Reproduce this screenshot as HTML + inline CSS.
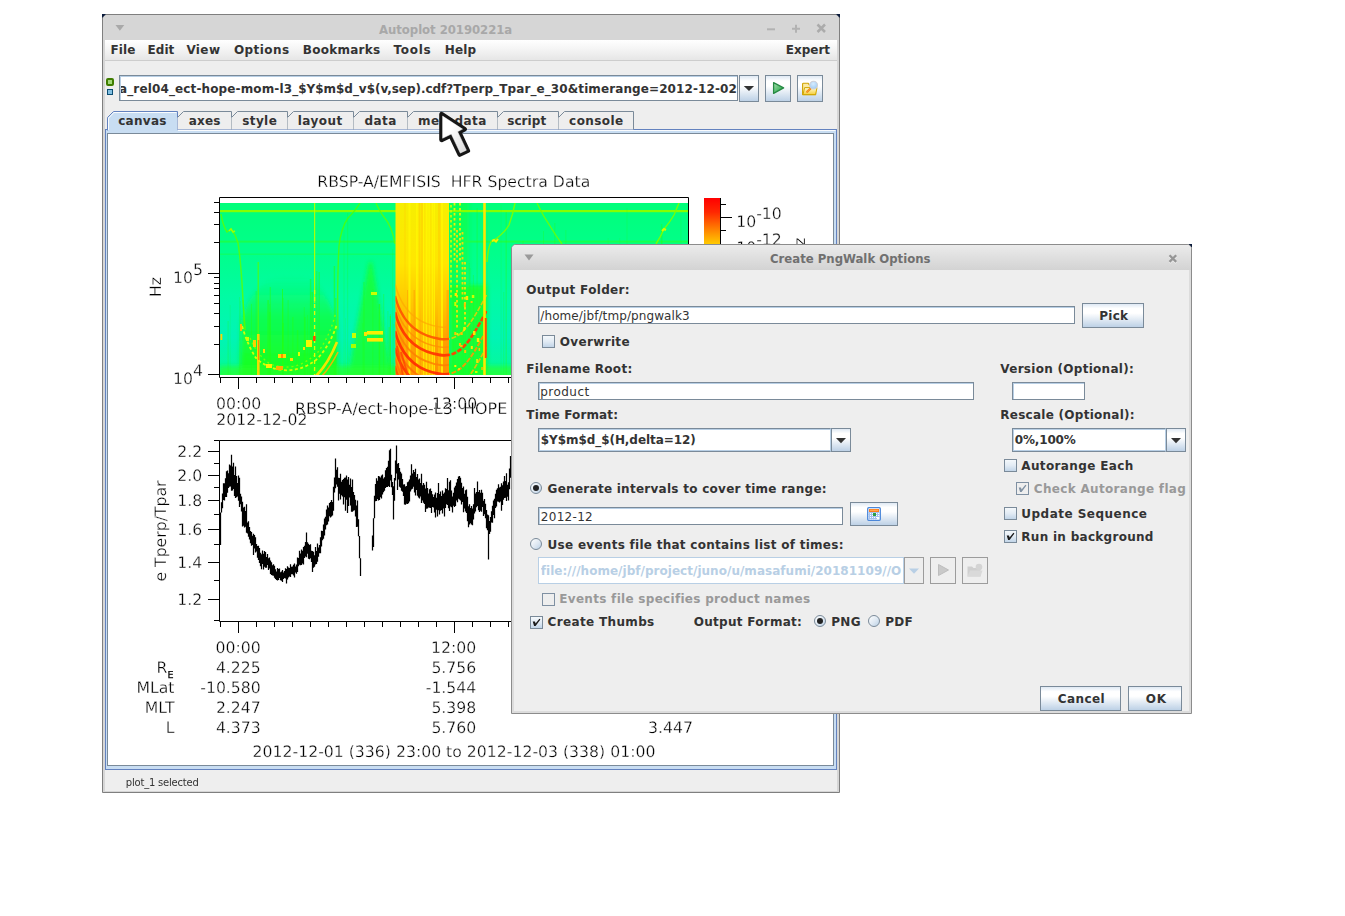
<!DOCTYPE html>
<html><head><meta charset="utf-8"><title>Autoplot</title>
<style>

html,body{margin:0;padding:0;background:#fff;}
body{width:1345px;height:916px;position:relative;overflow:hidden;font-family:"DejaVu Sans","Liberation Sans",sans-serif;font-size:12px;color:#333;}
div,span{position:absolute;box-sizing:border-box;}
.b{font-weight:bold;letter-spacing:0.25px;white-space:pre;line-height:14px;}
.n{font-weight:normal;letter-spacing:0.1px;white-space:pre;line-height:14px;}
#win{left:102px;top:14px;width:738px;height:779px;background:#d6d6d6;border:1px solid #7f7f7f;border-radius:4px 4px 0 0;}
.corner{width:4px;height:4px;background:#0a1a3a;}
.wt{font:bold 13px "DejaVu Sans Condensed","DejaVu Sans",sans-serif;white-space:pre;line-height:16px;}
#menubar{left:105px;top:40px;width:732px;height:21px;background:linear-gradient(#ffffff,#f6f6f6 40%,#e6e6e6);border-bottom:1px solid #cdcdcd;}
#pane{left:105px;top:61px;width:732px;height:730px;background:#eeeeee;}
.tf{background:#fff;border:1px solid #7a8a99;box-shadow:inset 1px 1px 0 #b8cfe5;overflow:hidden;white-space:pre;}
.btn{border:1px solid #7a8a99;background:linear-gradient(#dfe9f4 0%,#ffffff 20%,#ffffff 40%,#bdd1e6 100%);}
.btn.dis{border-color:#9c9c9c;background:#eeeeee;}
.cb{width:13px;height:13px;border:1px solid #7a8a99;background:linear-gradient(#f4f8fb 0%,#e2ebf4 50%,#c2d5e8 100%);}
.cb.dis{border-color:#7f90a2;background:#eeeeee;}
.rb{width:12px;height:12px;border:1px solid #7a8a99;border-radius:50%;background:linear-gradient(135deg,#ffffff 0%,#dbe6f1 60%,#b8cfe5 100%);}
.rb.on::after{content:"";position:absolute;left:2px;top:2px;width:6px;height:6px;border-radius:50%;background:#222;}
#dlg{left:511px;top:244px;width:681px;height:470px;border:1px solid #8c8c8c;border-radius:5px 5px 0 0;background:#dcdcdc;box-shadow:inset 0 1px 0 #fafafa;}
#dtitle{left:512px;top:245px;width:679px;height:25px;border-radius:4px 4px 0 0;background:linear-gradient(#ebebeb,#d3d3d3);}
#dbody{left:514px;top:270px;width:675px;height:441px;background:#eeeeee;}
.dis{color:#999;}
svg{position:absolute;}

</style></head>
<body>

<div id="win"></div>
<div class="corner" style="left:102px;top:14px;clip-path:polygon(0 0,100% 0,0 100%)"></div>
<div class="corner" style="left:836px;top:14px;clip-path:polygon(0 0,100% 0,100% 100%)"></div>
<span class="wt" style="left:379px;top:22px;color:#a8a8a8;letter-spacing:-0.05px">Autoplot 20190221a</span>
<svg style="left:100px;top:14px" width="745" height="26" viewBox="0 0 745 26">
<path d="M15.5 11 L24.3 11 L19.9 16.8 Z" fill="#a9a9a9"/>
<path d="M667 15.3 H675" stroke="#b2b2b2" stroke-width="2"/>
<path d="M692 14.7 H700 M696 10.7 V18.7" stroke="#b2b2b2" stroke-width="2"/>
<path d="M717.5 10.5 L725 18 M725 10.5 L717.5 18" stroke="#ababab" stroke-width="2.5"/>
</svg>
<div id="menubar"></div>
<span class="b" style="left:110.4px;top:43px;letter-spacing:0.184px;">File</span>
<span class="b" style="left:147.6px;top:43px;letter-spacing:0.015px;">Edit</span>
<span class="b" style="left:186.4px;top:43px;letter-spacing:0.395px;">View</span>
<span class="b" style="left:233.9px;top:43px;letter-spacing:0.446px;">Options</span>
<span class="b" style="left:302.8px;top:43px;letter-spacing:0.248px;">Bookmarks</span>
<span class="b" style="left:393.5px;top:43px;letter-spacing:0.691px;">Tools</span>
<span class="b" style="left:444.7px;top:43px;letter-spacing:0.177px;">Help</span>
<span class="b" style="left:785.8px;top:43px;letter-spacing:-0.005px;">Expert</span>
<div id="pane"></div>
<div style="left:106px;top:78px;width:8px;height:8px;border:2px solid #3f7d00;border-radius:2px;background:#a2d878"></div>
<div style="left:107px;top:89px;width:6px;height:6px;border:1px solid #0b4d74;background:#82c0e2"></div>
<div class="tf" style="left:119px;top:75px;width:619px;height:26px"></div>
<div style="left:121px;top:77px;width:616px;height:22px;overflow:hidden"><span class="b" style="left:-2.0px;top:5px;letter-spacing:0.132px;">a_rel04_ect-hope-mom-l3_</span><span class="b" style="left:177.3px;top:5px;letter-spacing:-0.038px;">$Y$m$d_v$(v,sep).cdf?</span><span class="b" style="left:332.2px;top:5px;letter-spacing:0.100px;">Tperp_Tpar_e_30&amp;timerange=2012-12-02</span></div>
<div class="btn" style="left:739px;top:75px;width:20px;height:27px"></div>
<svg style="left:739px;top:75px" width="20" height="27" viewBox="0 0 20 27"><path d="M4.8 10.9 L15.1 10.9 L10 16 Z" fill="#333"/></svg>
<div class="btn" style="left:765px;top:75px;width:26px;height:27px"></div>
<svg style="left:765px;top:75px" width="26" height="27" viewBox="0 0 26 27"><defs><linearGradient id="gpl" x1="0" y1="0" x2="1" y2="1"><stop offset="0" stop-color="#a8e0b0"/><stop offset="0.6" stop-color="#4db866"/><stop offset="1" stop-color="#2f9a4c"/></linearGradient></defs><path d="M8.6 7.6 L18.6 12.9 L8.6 18.4 Z" fill="url(#gpl)" stroke="#278a44" stroke-width="1.3" stroke-linejoin="round"/></svg>
<div class="btn" style="left:797px;top:75px;width:26px;height:27px"></div>
<svg style="left:797px;top:75px" width="26" height="27" viewBox="0 0 26 27">
<defs><linearGradient id="gfo" x1="0" y1="0" x2="0" y2="1"><stop offset="0" stop-color="#fffbd0"/><stop offset="1" stop-color="#f6cf3c"/></linearGradient>
<radialGradient id="gle" cx="0.45" cy="0.35" r="0.7"><stop offset="0" stop-color="#d8ecff"/><stop offset="1" stop-color="#9ccaf4"/></radialGradient></defs>
<path d="M5.6 19.6 V9 Q5.6 8.2 6.4 8.2 H11 L12.4 10 H18.6 V19.6 Z" fill="#fbeaa4" stroke="#cfa200" stroke-width="1.1" stroke-linejoin="round"/>
<path d="M6 19.6 L7.6 12.6 H20 L18.6 19.6 Z" fill="url(#gfo)" stroke="#d2a700" stroke-width="1" stroke-linejoin="round"/>
<path d="M10.2 16.8 L13.6 13.5" stroke="#f08418" stroke-width="2.2" stroke-linecap="round"/>
<path d="M10.6 16.4 L13.2 13.9" stroke="#ffd040" stroke-width="0.9" stroke-dasharray="0.8 0.8"/>
<circle cx="16.6" cy="10.1" r="3.9" fill="url(#gle)" stroke="#d0d0d8" stroke-width="1.1"/>
</svg>
<div style="left:105px;top:129px;width:732px;height:641px;border:1px solid #6382bf;background:#c8ddf2"></div>
<svg style="left:0;top:0" width="1345" height="140" viewBox="0 0 1345 140"><path d="M107.5 130.5 L107.5 117.5 L113.5 111.5 L177.5 111.5 L177.5 129.5 L177.5 130.5 Z" fill="#c8ddf2" stroke="none"/><path d="M107.5 130.5 L107.5 117.5 L113.5 111.5 L177.5 111.5 L177.5 129.5" fill="none" stroke="#6382bf" stroke-width="1"/><path d="M177.5 129.5 L177.5 117.5 L183.5 111.5 L231.5 111.5 L231.5 129.5 Z" fill="#eeeeee" stroke="none"/><path d="M177.5 117.5 L183.5 111.5 L231.5 111.5 L231.5 129.5" fill="none" stroke="#7a8a99" stroke-width="1"/><path d="M231.5 129.5 L231.5 117.5 L237.5 111.5 L287.5 111.5 L287.5 129.5 Z" fill="#eeeeee" stroke="none"/><path d="M231.5 117.5 L237.5 111.5 L287.5 111.5 L287.5 129.5" fill="none" stroke="#7a8a99" stroke-width="1"/><path d="M287.5 129.5 L287.5 117.5 L293.5 111.5 L353.5 111.5 L353.5 129.5 Z" fill="#eeeeee" stroke="none"/><path d="M287.5 117.5 L293.5 111.5 L353.5 111.5 L353.5 129.5" fill="none" stroke="#7a8a99" stroke-width="1"/><path d="M353.5 129.5 L353.5 117.5 L359.5 111.5 L407.5 111.5 L407.5 129.5 Z" fill="#eeeeee" stroke="none"/><path d="M353.5 117.5 L359.5 111.5 L407.5 111.5 L407.5 129.5" fill="none" stroke="#7a8a99" stroke-width="1"/><path d="M407.5 129.5 L407.5 117.5 L413.5 111.5 L497.5 111.5 L497.5 129.5 Z" fill="#eeeeee" stroke="none"/><path d="M407.5 117.5 L413.5 111.5 L497.5 111.5 L497.5 129.5" fill="none" stroke="#7a8a99" stroke-width="1"/><path d="M497.5 129.5 L497.5 117.5 L503.5 111.5 L558.5 111.5 L558.5 129.5 Z" fill="#eeeeee" stroke="none"/><path d="M497.5 117.5 L503.5 111.5 L558.5 111.5 L558.5 129.5" fill="none" stroke="#7a8a99" stroke-width="1"/><path d="M558.5 129.5 L558.5 117.5 L564.5 111.5 L633.5 111.5 L633.5 129.5 Z" fill="#eeeeee" stroke="none"/><path d="M558.5 117.5 L564.5 111.5 L633.5 111.5 L633.5 129.5" fill="none" stroke="#7a8a99" stroke-width="1"/><path d="M108.5 130 V118.2 L113.9 112.5 H176.5" fill="none" stroke="#ffffff" stroke-width="1" opacity="0.9"/><path d="M178 130.5 H835.5" fill="none" stroke="#ffffff" stroke-width="1" opacity="0.9"/></svg>
<span class="b" style="left:118.2px;top:114px;letter-spacing:0.295px;">canvas</span>
<span class="b" style="left:188.7px;top:114px;letter-spacing:0.219px;">axes</span>
<span class="b" style="left:242.2px;top:114px;letter-spacing:0.409px;">style</span>
<span class="b" style="left:297.8px;top:114px;letter-spacing:0.435px;">layout</span>
<span class="b" style="left:364.5px;top:114px;letter-spacing:0.467px;">data</span>
<span class="b" style="left:418.0px;top:114px;letter-spacing:0.475px;">metadata</span>
<span class="b" style="left:507.2px;top:114px;letter-spacing:0.079px;">script</span>
<span class="b" style="left:569.1px;top:114px;letter-spacing:0.422px;">console</span>
<div style="left:107px;top:133px;width:727px;height:633px;background:#fff;border:1px solid #7a8a99;border-right-color:#7a8a99"></div>
<svg style="left:0;top:0;will-change:transform;opacity:0.999" width="1345" height="916" viewBox="0 0 1345 916" font-family="DejaVu Sans, Liberation Sans, sans-serif" font-size="15.7" fill="#000" text-rendering="geometricPrecision"><style>text{stroke:#fff;stroke-width:0.32px;}</style>
<defs><clipPath id="cpl"><rect x="220" y="441" width="470" height="180"/></clipPath><clipPath id="cpc"><rect x="108" y="134" width="725" height="632"/></clipPath><linearGradient id="gcb" x1="0" y1="0" x2="0" y2="1"><stop offset="0" stop-color="#ff0000"/><stop offset="0.08" stop-color="#ff2800"/><stop offset="0.2" stop-color="#ff9800"/><stop offset="0.3" stop-color="#fff000"/><stop offset="0.5" stop-color="#30ff00"/><stop offset="0.7" stop-color="#00ffa0"/><stop offset="0.85" stop-color="#0080ff"/><stop offset="1" stop-color="#000060"/></linearGradient></defs>
<g clip-path="url(#cpc)">
<text x="453.8" y="187" text-anchor="middle" xml:space="preserve">RBSP-A/EMFISIS  HFR Spectra Data</text>
<defs><linearGradient id="gbase" x1="0" y1="0" x2="0" y2="1"><stop offset="0" stop-color="#00ff7a"/><stop offset="0.3" stop-color="#00ff8c"/><stop offset="0.55" stop-color="#00fba4"/><stop offset="0.78" stop-color="#00f4b6"/><stop offset="0.93" stop-color="#04f8a0"/><stop offset="1" stop-color="#18ff60"/></linearGradient><linearGradient id="ghot" x1="0" y1="0" x2="0" y2="1"><stop offset="0" stop-color="#f6ee00"/><stop offset="0.35" stop-color="#ffe600"/><stop offset="0.6" stop-color="#ffc400"/><stop offset="0.8" stop-color="#ffa000"/><stop offset="1" stop-color="#ff9000"/></linearGradient><linearGradient id="gU" x1="0" y1="0" x2="0" y2="1"><stop offset="0" stop-color="#10ff40" stop-opacity="0"/><stop offset="0.4" stop-color="#14ff30" stop-opacity="0.7"/><stop offset="1" stop-color="#18ff18" stop-opacity="1"/></linearGradient><filter id="bl2" x="-10%" y="-10%" width="120%" height="120%"><feGaussianBlur stdDeviation="2.2"/></filter><filter id="bl1" x="-10%" y="-10%" width="120%" height="120%"><feGaussianBlur stdDeviation="0.7"/></filter><clipPath id="cps"><rect x="220" y="203" width="468" height="172"/></clipPath></defs>
<g clip-path="url(#cps)">
<rect x="220" y="203" width="468" height="172" fill="url(#gbase)"/>
<g filter="url(#bl2)">
<path d="M240 378 L241 322 Q247 300 258 288 Q285 268 316 282 Q330 300 337 322 L338 378 Z" fill="url(#gU)"/>
<path d="M348 378 L356 330 L369 262 L372 262 L382 318 L392 378 Z" fill="#18ff28" opacity="0.75"/>
<rect x="220" y="366" width="468" height="14" fill="#28ff30" opacity="0.55"/>
<rect x="449" y="285" width="38" height="100" fill="#18ff30" opacity="0.9"/>
<rect x="449" y="200" width="20" height="100" fill="#18ff30" opacity="0.5"/>
</g>
<rect x="220" y="210" width="468" height="2.2" fill="#86ff00"/>
<rect x="220" y="240.6" width="468" height="2" fill="#1cff48" opacity="0.9"/>
<rect x="220" y="253.5" width="176" height="1.4" fill="#10ff60" opacity="0.8"/>
<rect x="372.3" y="289" width="1" height="87" fill="#22ff18" opacity="0.37"/>
<rect x="603.1" y="251" width="0.8" height="125" fill="#22ff18" opacity="0.16"/>
<rect x="457.5" y="216" width="0.8" height="160" fill="#22ff18" opacity="0.25"/>
<rect x="333.7" y="266" width="1.4" height="110" fill="#22ff18" opacity="0.58"/>
<rect x="661.6" y="277" width="0.8" height="99" fill="#22ff18" opacity="0.25"/>
<rect x="675.0" y="275" width="0.8" height="101" fill="#22ff18" opacity="0.18"/>
<rect x="472.9" y="275" width="1" height="101" fill="#22ff18" opacity="0.32"/>
<rect x="269.8" y="287" width="1" height="89" fill="#22ff18" opacity="0.57"/>
<rect x="251.1" y="304" width="0.8" height="72" fill="#22ff18" opacity="0.55"/>
<rect x="468.7" y="263" width="1" height="113" fill="#22ff18" opacity="0.38"/>
<rect x="389.8" y="316" width="1" height="60" fill="#22ff18" opacity="0.63"/>
<rect x="335.3" y="298" width="1" height="78" fill="#22ff18" opacity="0.70"/>
<rect x="560.5" y="281" width="1" height="95" fill="#22ff18" opacity="0.17"/>
<rect x="459.5" y="300" width="1" height="76" fill="#22ff18" opacity="0.19"/>
<rect x="240.2" y="301" width="0.8" height="75" fill="#22ff18" opacity="0.29"/>
<rect x="628.2" y="248" width="1" height="128" fill="#22ff18" opacity="0.24"/>
<rect x="452.5" y="214" width="1.4" height="162" fill="#22ff18" opacity="0.17"/>
<rect x="347.3" y="213" width="0.8" height="163" fill="#22ff18" opacity="0.33"/>
<rect x="522.3" y="241" width="1.4" height="135" fill="#22ff18" opacity="0.25"/>
<rect x="532.3" y="323" width="0.8" height="53" fill="#22ff18" opacity="0.24"/>
<rect x="505.5" y="212" width="1.4" height="164" fill="#22ff18" opacity="0.34"/>
<rect x="282.0" y="289" width="1" height="87" fill="#22ff18" opacity="0.72"/>
<rect x="452.4" y="261" width="1" height="115" fill="#22ff18" opacity="0.29"/>
<rect x="631.9" y="313" width="1.4" height="63" fill="#22ff18" opacity="0.22"/>
<rect x="388.5" y="327" width="1.4" height="49" fill="#22ff18" opacity="0.41"/>
<rect x="303.8" y="307" width="1" height="69" fill="#22ff18" opacity="0.35"/>
<rect x="607.6" y="238" width="1" height="138" fill="#22ff18" opacity="0.15"/>
<rect x="393.3" y="324" width="1" height="52" fill="#22ff18" opacity="0.32"/>
<rect x="461.2" y="262" width="0.8" height="114" fill="#22ff18" opacity="0.37"/>
<rect x="663.7" y="255" width="1.4" height="121" fill="#22ff18" opacity="0.25"/>
<rect x="310.4" y="292" width="1" height="84" fill="#22ff18" opacity="0.39"/>
<rect x="500.7" y="205" width="0.8" height="171" fill="#22ff18" opacity="0.19"/>
<rect x="269.1" y="304" width="1" height="72" fill="#22ff18" opacity="0.38"/>
<rect x="318.5" y="272" width="1.4" height="104" fill="#22ff18" opacity="0.45"/>
<rect x="383.2" y="294" width="1" height="82" fill="#22ff18" opacity="0.40"/>
<rect x="675.7" y="265" width="1.4" height="111" fill="#22ff18" opacity="0.17"/>
<rect x="269.4" y="312" width="1" height="64" fill="#22ff18" opacity="0.54"/>
<rect x="543.1" y="231" width="0.8" height="145" fill="#22ff18" opacity="0.39"/>
<rect x="389.9" y="314" width="0.8" height="62" fill="#22ff18" opacity="0.47"/>
<rect x="520.3" y="292" width="0.8" height="84" fill="#22ff18" opacity="0.22"/>
<rect x="392.1" y="249" width="1" height="127" fill="#22ff18" opacity="0.21"/>
<rect x="473.3" y="285" width="1" height="91" fill="#22ff18" opacity="0.30"/>
<rect x="587.8" y="306" width="1" height="70" fill="#22ff18" opacity="0.35"/>
<rect x="565.3" y="230" width="1" height="146" fill="#22ff18" opacity="0.27"/>
<rect x="561.2" y="304" width="0.8" height="72" fill="#22ff18" opacity="0.27"/>
<rect x="311.9" y="292" width="1" height="84" fill="#22ff18" opacity="0.72"/>
<rect x="680.4" y="215" width="1" height="161" fill="#22ff18" opacity="0.18"/>
<rect x="378.7" y="304" width="1.4" height="72" fill="#22ff18" opacity="0.71"/>
<rect x="612.0" y="319" width="1.4" height="57" fill="#22ff18" opacity="0.24"/>
<rect x="520.4" y="319" width="0.8" height="57" fill="#22ff18" opacity="0.35"/>
<rect x="570.1" y="316" width="1.4" height="60" fill="#22ff18" opacity="0.26"/>
<rect x="517.0" y="305" width="0.8" height="71" fill="#22ff18" opacity="0.39"/>
<rect x="661.3" y="226" width="1" height="150" fill="#22ff18" opacity="0.18"/>
<rect x="292.1" y="317" width="1.4" height="59" fill="#22ff18" opacity="0.41"/>
<rect x="605.5" y="287" width="1.4" height="89" fill="#22ff18" opacity="0.24"/>
<rect x="476.6" y="208" width="1" height="168" fill="#22ff18" opacity="0.35"/>
<rect x="559.0" y="271" width="0.8" height="105" fill="#22ff18" opacity="0.38"/>
<rect x="626.5" y="208" width="1" height="168" fill="#22ff18" opacity="0.20"/>
<rect x="454.5" y="237" width="1" height="139" fill="#22ff18" opacity="0.25"/>
<rect x="282.8" y="323" width="1" height="53" fill="#22ff18" opacity="0.61"/>
<rect x="600.2" y="308" width="1.4" height="68" fill="#22ff18" opacity="0.37"/>
<rect x="282.7" y="298" width="1" height="78" fill="#22ff18" opacity="0.36"/>
<rect x="307.0" y="315" width="0.8" height="61" fill="#22ff18" opacity="0.41"/>
<rect x="287.7" y="300" width="0.8" height="76" fill="#22ff18" opacity="0.48"/>
<rect x="462.5" y="303" width="1.4" height="73" fill="#22ff18" opacity="0.18"/>
<rect x="482.0" y="229" width="1" height="147" fill="#22ff18" opacity="0.16"/>
<rect x="267.4" y="300" width="1.4" height="76" fill="#22ff18" opacity="0.65"/>
<rect x="645.4" y="246" width="1.4" height="130" fill="#22ff18" opacity="0.39"/>
<rect x="503.2" y="292" width="1" height="84" fill="#22ff18" opacity="0.26"/>
<rect x="469.4" y="268" width="1.4" height="108" fill="#22ff18" opacity="0.21"/>
<rect x="464.8" y="320" width="1" height="56" fill="#22ff18" opacity="0.37"/>
<rect x="316.0" y="271" width="1.4" height="105" fill="#22ff18" opacity="0.40"/>
<rect x="255.7" y="291" width="1" height="85" fill="#22ff18" opacity="0.44"/>
<rect x="362.5" y="323" width="0.8" height="53" fill="#22ff18" opacity="0.41"/>
<rect x="554.3" y="223" width="1" height="153" fill="#22ff18" opacity="0.37"/>
<rect x="670.9" y="298" width="1" height="78" fill="#22ff18" opacity="0.17"/>
<rect x="632.6" y="329" width="1" height="47" fill="#22ff18" opacity="0.36"/>
<rect x="296.9" y="330" width="1.4" height="46" fill="#22ff18" opacity="0.51"/>
<rect x="387.5" y="311" width="0.8" height="65" fill="#22ff18" opacity="0.36"/>
<rect x="479.1" y="293" width="1.4" height="83" fill="#22ff18" opacity="0.25"/>
<rect x="462.1" y="269" width="1" height="107" fill="#22ff18" opacity="0.17"/>
<rect x="679.1" y="326" width="1" height="50" fill="#22ff18" opacity="0.18"/>
<rect x="345.2" y="318" width="0.8" height="58" fill="#22ff18" opacity="0.20"/>
<rect x="572.7" y="311" width="1.4" height="65" fill="#22ff18" opacity="0.32"/>
<rect x="660.9" y="224" width="1.4" height="152" fill="#22ff18" opacity="0.38"/>
<rect x="486.8" y="216" width="1" height="160" fill="#22ff18" opacity="0.16"/>
<rect x="541.3" y="317" width="1.4" height="59" fill="#22ff18" opacity="0.22"/>
<rect x="229.8" y="305" width="0.8" height="71" fill="#22ff18" opacity="0.17"/>
<rect x="619.3" y="238" width="0.8" height="138" fill="#22ff18" opacity="0.18"/>
<rect x="227.4" y="321" width="1.4" height="55" fill="#22ff18" opacity="0.22"/>
<rect x="282.0" y="326" width="1" height="50" fill="#22ff18" opacity="0.74"/>
<rect x="343.5" y="230" width="1" height="146" fill="#22ff18" opacity="0.23"/>
<rect x="363.5" y="282" width="1" height="94" fill="#22ff18" opacity="0.55"/>
<rect x="304.5" y="317" width="1" height="59" fill="#22ff18" opacity="0.75"/>
<rect x="239.1" y="297" width="0.8" height="79" fill="#22ff18" opacity="0.29"/>
<rect x="309.9" y="279" width="1.4" height="97" fill="#22ff18" opacity="0.53"/>
<path d="M221 214 Q223 226 227 232 L231 229 L235 235 L238 243 Q241 262 243 300 L245 330" fill="none" stroke="#5cff00" stroke-width="1.5" opacity="0.8"/>
<path d="M338 330 Q337 280 339 246 Q341 228 348 218 Q356 210 360 203" fill="none" stroke="#50ff00" stroke-width="1.4" opacity="0.8"/>
<path d="M376 203 Q380 212 384 217 Q392 226 395 244" fill="none" stroke="#60ff00" stroke-width="1.4" opacity="0.8"/>
<path d="M487 262 Q488 248 491 242 L497 238 Q505 232 509 225 Q513 214 515 203" fill="none" stroke="#7cff00" stroke-width="1.5" opacity="0.9"/>
<path d="M537 203 Q543 216 550 226 Q556 236 562 244" fill="none" stroke="#70ff00" stroke-width="1.4" opacity="0.85"/>
<path d="M656 244 Q661 236 664 229 Q670 222 674 215 L679 203" fill="none" stroke="#7cff00" stroke-width="1.5" opacity="0.9"/>
<path d="M243 300 L244.5 330" fill="none" stroke="#40ff10" stroke-width="1.2" opacity="0.7"/>
<path d="M492 241 l2 -1 l2 1.5 l2 -2.5" stroke="#f4f000" stroke-width="2" fill="none"/>
<path d="M662 231 l2 -2 l2 1" stroke="#d8f800" stroke-width="2" fill="none"/>
<path d="M229 231 l2 -2 l2 3 l2 -1" stroke="#a0ff00" stroke-width="1.6" fill="none"/>
<path d="M242 326 Q248 346 256 358 Q266 368 282 370 Q300 372 316 360 Q330 346 337 324" fill="none" stroke="#e0ff00" stroke-width="1.8" stroke-dasharray="3 2.5" opacity="0.95"/>
<path d="M250 338 Q258 356 270 364 Q296 374 318 352 Q330 336 336 312" fill="none" stroke="#90ff00" stroke-width="1.4" stroke-dasharray="2 3" opacity="0.8"/>
<path d="M316 376 Q328 364 337 342" fill="none" stroke="#ffe400" stroke-width="2.6" opacity="0.95"/>
<path d="M322 376 Q331 366 338 352" fill="none" stroke="#ffb000" stroke-width="1.6" opacity="0.9"/>
<rect x="314" y="203" width="1.2" height="100" fill="#b4ff00" opacity="0.95"/>
<path d="M314.6 290 V376" stroke="#e8f800" stroke-width="1.3" stroke-dasharray="4 3"/>
<rect x="257.6" y="262" width="1.2" height="114" fill="#58ff00" opacity="0.8"/>
<rect x="257" y="334" width="2.6" height="42" fill="#ffd800" opacity="0.95"/>
<rect x="258" y="340" width="1.2" height="20" fill="#ff8000" opacity="0.9"/>
<rect x="278" y="354" width="8" height="4" fill="#ffe000"/>
<rect x="281" y="354" width="2" height="4" fill="#ff9000"/>
<rect x="266" y="364" width="6" height="4" fill="#fff000"/>
<rect x="276" y="366" width="7" height="4" fill="#ffb000"/>
<rect x="306" y="340" width="6" height="7" fill="#f6f600"/>
<rect x="313" y="336" width="2.6" height="5" fill="#ff4800"/>
<rect x="352" y="333" width="4" height="5" fill="#c8ff00"/>
<rect x="351" y="344" width="5" height="4" fill="#a8ff00"/>
<rect x="364" y="332" width="3" height="4" fill="#ffe000"/>
<rect x="367" y="331" width="16" height="3.6" fill="#f8f000"/>
<rect x="367" y="338" width="16" height="3.6" fill="#ffe800"/>
<rect x="371" y="292" width="6" height="3" fill="#c8ff00"/>
<rect x="240" y="324" width="2" height="7" fill="#ffb800"/>
<rect x="220.5" y="334" width="1.8" height="6" fill="#ffd000"/>
<rect x="246" y="337" width="3" height="4" fill="#d0ff00"/>
<rect x="253" y="340" width="3" height="7" fill="#ffd000"/>
<rect x="263" y="349" width="2" height="4" fill="#ffe000"/>
<rect x="290" y="358" width="3" height="3" fill="#ffe000"/>
<rect x="298" y="352" width="2" height="4" fill="#e0ff00"/>
<rect x="303" y="347" width="2" height="3" fill="#ffe000"/>
<rect x="395.5" y="203" width="53.5" height="173" fill="url(#ghot)"/>
<rect x="404.5" y="203" width="1" height="173" fill="#ffcc00" opacity="0.55"/>
<rect x="407.0" y="290" width="1" height="86" fill="#ff9c00" opacity="0.5"/>
<rect x="408.5" y="203" width="2" height="173" fill="#fff600" opacity="0.8"/>
<rect x="413.5" y="290" width="1.5" height="86" fill="#ff9c00" opacity="0.5"/>
<rect x="416.0" y="203" width="1.5" height="173" fill="#fff600" opacity="0.8"/>
<rect x="417.5" y="203" width="1" height="173" fill="#fff600" opacity="0.8"/>
<rect x="418.5" y="203" width="1.5" height="173" fill="#ffcc00" opacity="0.55"/>
<rect x="420.5" y="203" width="2.5" height="173" fill="#ffcc00" opacity="0.55"/>
<rect x="423.0" y="203" width="1.5" height="173" fill="#fff600" opacity="0.8"/>
<rect x="424.5" y="203" width="1" height="173" fill="#ffcc00" opacity="0.55"/>
<rect x="425.5" y="203" width="2" height="173" fill="#fff600" opacity="0.8"/>
<rect x="428.5" y="203" width="1" height="173" fill="#fff600" opacity="0.8"/>
<rect x="429.5" y="203" width="1" height="173" fill="#fff600" opacity="0.8"/>
<rect x="430.5" y="203" width="1" height="173" fill="#ffcc00" opacity="0.55"/>
<rect x="431.5" y="203" width="2" height="173" fill="#fff600" opacity="0.8"/>
<rect x="434.0" y="203" width="1" height="173" fill="#fff600" opacity="0.8"/>
<rect x="438.0" y="203" width="2.5" height="173" fill="#ffcc00" opacity="0.55"/>
<rect x="441.0" y="203" width="2" height="173" fill="#fff600" opacity="0.8"/>
<rect x="446.5" y="290" width="2.5" height="86" fill="#ff9c00" opacity="0.5"/>
<clipPath id="cph"><rect x="395.5" y="203" width="53.5" height="172"/></clipPath><clipPath id="cpt"><rect x="449" y="203" width="38" height="172"/></clipPath>
<g clip-path="url(#cph)">
<path d="M395 284 C402 312 420 324 440 327 S470 314 487 282" fill="none" stroke="#ffa800" stroke-width="1.6" opacity="0.7"/>
<path d="M395 296 C402 324 420 336 440 339 S470 326 487 294" fill="none" stroke="#ff5a00" stroke-width="2.4" opacity="0.95"/>
<path d="M395 304 C402 332 420 344 440 347 S470 334 487 302" fill="none" stroke="#ff9000" stroke-width="1.6" opacity="0.8"/>
<path d="M395 312 C402 340 420 352 440 355 S470 342 487 310" fill="none" stroke="#ff3800" stroke-width="2.8" opacity="0.95"/>
<path d="M395 322 C402 350 420 362 440 365 S470 352 487 320" fill="none" stroke="#ff8000" stroke-width="1.8" opacity="0.85"/>
<path d="M395 331 C402 359 420 371 440 374 S470 361 487 329" fill="none" stroke="#ff3000" stroke-width="2.8" opacity="0.95"/>
<path d="M395 340 C402 368 420 380 440 383 S470 370 487 338" fill="none" stroke="#ff7000" stroke-width="1.8" opacity="0.85"/>
<path d="M395 348 C402 376 420 388 440 391 S470 378 487 346" fill="none" stroke="#ff3a00" stroke-width="2.6" opacity="0.95"/>
<path d="M395 358 C402 386 420 398 440 401 S470 388 487 356" fill="none" stroke="#ff7000" stroke-width="1.8" opacity="0.8"/>
<path d="M395 366 C402 394 420 406 440 409 S470 396 487 364" fill="none" stroke="#ff4a00" stroke-width="2.2" opacity="0.85"/>
<path d="M397 346 L403 376" stroke="#ff4800" stroke-width="1.8" opacity="0.85"/>
<path d="M401 352 L408 376" stroke="#ff4800" stroke-width="1.8" opacity="0.85"/>
</g><g clip-path="url(#cpt)">
<path d="M395 312 C402 340 420 352 440 355 S470 342 487 310" fill="none" stroke="#ff4000" stroke-width="2.6" stroke-dasharray="5 1.5" opacity="0.95"/>
<path d="M395 331 C402 359 420 371 440 374 S470 361 487 329" fill="none" stroke="#ff9800" stroke-width="2.0" stroke-dasharray="5 1.5" opacity="0.9"/>
<path d="M395 348 C402 376 420 388 440 391 S470 378 487 346" fill="none" stroke="#ffb800" stroke-width="1.8" stroke-dasharray="5 1.5" opacity="0.85"/>
<path d="M395 296 C402 324 420 336 440 339 S470 326 487 294" fill="none" stroke="#ffc800" stroke-width="1.6" stroke-dasharray="5 1.5" opacity="0.8"/>
</g>
<path d="M451 205 V300" stroke="#c8ff00" stroke-width="1.8" stroke-dasharray="2.5 2.5" opacity="0.95"/>
<path d="M454.5 203 V262" stroke="#fff000" stroke-width="1.8" stroke-dasharray="2.5 2.5" opacity="0.95"/>
<path d="M457 230 V330" stroke="#ffe000" stroke-width="1.8" stroke-dasharray="2.5 2.5" opacity="0.95"/>
<path d="M460 203 V262" stroke="#f0f800" stroke-width="1.8" stroke-dasharray="2.5 2.5" opacity="0.95"/>
<path d="M462.5 232 V300" stroke="#ffd800" stroke-width="1.8" stroke-dasharray="2.5 2.5" opacity="0.95"/>
<path d="M465 262 V330" stroke="#ffe400" stroke-width="1.8" stroke-dasharray="2.5 2.5" opacity="0.95"/>
<rect x="473.0" y="331" width="2.5" height="4" fill="#ffe800"/>
<rect x="476.8" y="338" width="2.5" height="4" fill="#fff000"/>
<rect x="454.6" y="293" width="2.5" height="3" fill="#ffe800"/>
<rect x="463.3" y="327" width="1.5" height="4" fill="#ffe800"/>
<rect x="470.8" y="346" width="2" height="3" fill="#ffe800"/>
<rect x="465.7" y="296" width="2.5" height="4" fill="#ffe800"/>
<rect x="471.8" y="295" width="2.5" height="3" fill="#c8ff00"/>
<rect x="476.3" y="359" width="1.5" height="4" fill="#fff000"/>
<rect x="458.9" y="343" width="2" height="3" fill="#ffc000"/>
<rect x="454.3" y="365" width="2" height="2" fill="#fff000"/>
<rect x="454.3" y="302" width="2" height="4" fill="#c8ff00"/>
<rect x="470.6" y="301" width="2" height="2" fill="#ffc000"/>
<rect x="460.1" y="345" width="2.5" height="2" fill="#ffc000"/>
<rect x="460.7" y="332" width="2" height="3" fill="#ffc000"/>
<rect x="475.0" y="371" width="2.5" height="2" fill="#c8ff00"/>
<rect x="481.3" y="367" width="1.5" height="3" fill="#ffc000"/>
<rect x="454.3" y="332" width="2" height="3" fill="#ffc000"/>
<rect x="458.3" y="368" width="1.5" height="2" fill="#ffe800"/>
<rect x="456.3" y="333" width="2" height="2" fill="#c8ff00"/>
<rect x="478.6" y="348" width="1.5" height="3" fill="#ffc000"/>
<rect x="463.8" y="303" width="2" height="4" fill="#ffc000"/>
<rect x="464.2" y="350" width="2" height="3" fill="#ffc000"/>
<rect x="483.2" y="203" width="2.6" height="173" fill="#ffe800"/>
<rect x="484.8" y="318" width="2" height="40" fill="#ff5000"/>
</g>
<path d="M219.5 377.5 V197.5 H688.5 V377.5 Z" fill="none" stroke="#000" stroke-width="1"/>
<path d="M214.0 242.5 H219.5 M214.0 224.5 H219.5 M214.0 212.5 H219.5 M214.0 202.5 H219.5 M214.0 277.5 H219.5 M214.0 283.5 H219.5 M214.0 288.5 H219.5 M214.0 295.5 H219.5 M214.0 303.5 H219.5 M214.0 313.5 H219.5 M214.0 326.5 H219.5 M214.0 344.5 H219.5 M208.0 273.5 H219.5 M208.0 374.5 H219.5 " stroke="#000" stroke-width="1" fill="none"/>
<text x="173" y="282.5" text-anchor="start" >10</text>
<text x="193" y="274.5" text-anchor="start" >5</text>
<text x="173" y="384.2" text-anchor="start" >10</text>
<text x="193" y="376.2" text-anchor="start" >4</text>
<text transform="translate(161,287) rotate(-90)" text-anchor="middle">Hz</text>
<path d="M220.5 377.5 v5.5 M238.5 377.5 v11.5 M256.5 377.5 v5.5 M274.5 377.5 v5.5 M292.5 377.5 v5.5 M310.5 377.5 v5.5 M328.5 377.5 v5.5 M346.5 377.5 v5.5 M364.5 377.5 v5.5 M382.5 377.5 v5.5 M400.5 377.5 v5.5 M418.5 377.5 v5.5 M436.5 377.5 v5.5 M454.5 377.5 v11.5 M472.5 377.5 v5.5 M490.5 377.5 v5.5 M508.5 377.5 v5.5 M526.5 377.5 v5.5 M544.5 377.5 v5.5 M562.5 377.5 v5.5 M580.5 377.5 v5.5 M598.5 377.5 v5.5 M616.5 377.5 v5.5 M634.5 377.5 v5.5 M652.5 377.5 v5.5 M670.5 377.5 v11.5 M688.5 377.5 v5.5 " stroke="#000" stroke-width="1" fill="none"/>
<path d="M220.5 621.5 v5.5 M238.5 621.5 v11.5 M256.5 621.5 v5.5 M274.5 621.5 v5.5 M292.5 621.5 v5.5 M310.5 621.5 v5.5 M328.5 621.5 v5.5 M346.5 621.5 v5.5 M364.5 621.5 v5.5 M382.5 621.5 v5.5 M400.5 621.5 v5.5 M418.5 621.5 v5.5 M436.5 621.5 v5.5 M454.5 621.5 v11.5 M472.5 621.5 v5.5 M490.5 621.5 v5.5 M508.5 621.5 v5.5 M526.5 621.5 v5.5 M544.5 621.5 v5.5 M562.5 621.5 v5.5 M580.5 621.5 v5.5 M598.5 621.5 v5.5 M616.5 621.5 v5.5 M634.5 621.5 v5.5 M652.5 621.5 v5.5 M670.5 621.5 v11.5 M688.5 621.5 v5.5 " stroke="#000" stroke-width="1" fill="none"/>
<text x="238.6" y="409" text-anchor="middle" >00:00</text>
<text x="454.6" y="409" text-anchor="middle" >12:00</text>
<text x="216.3" y="425" text-anchor="start" >2012-12-02</text>
<rect x="704" y="198" width="16.5" height="179" fill="url(#gcb)"/>
<path d="M720.5 198 V377" stroke="#000" stroke-width="1"/>
<path d="M720.5 204.5 h5.5 M720.5 217.5 h11.5 M720.5 230.5 h5.5 M720.5 244.5 h11.5 M720.5 257.5 h5.5 M720.5 270.5 h11.5 M720.5 283.5 h5.5 M720.5 296.5 h11.5 M720.5 310.5 h5.5 M720.5 323.5 h11.5 M720.5 336.5 h5.5 M720.5 349.5 h11.5 M720.5 362.5 h5.5 M720.5 376.5 h11.5 " stroke="#000" stroke-width="1" fill="none"/>
<text x="736.3" y="226.8" text-anchor="start" >10</text>
<text x="756.2" y="219.2" text-anchor="start" >-10</text>
<text x="736.3" y="253.0" text-anchor="start" >10</text>
<text x="756.2" y="245.4" text-anchor="start" >-12</text>
<text x="736.3" y="279.1" text-anchor="start" >10</text>
<text x="756.2" y="271.5" text-anchor="start" >-14</text>
<text x="736.3" y="305.2" text-anchor="start" >10</text>
<text x="756.2" y="297.6" text-anchor="start" >-16</text>
<text x="736.3" y="331.4" text-anchor="start" >10</text>
<text x="756.2" y="323.8" text-anchor="start" >-18</text>
<text x="736.3" y="357.6" text-anchor="start" >10</text>
<text x="756.2" y="349.9" text-anchor="start" >-20</text>
<text transform="translate(805.3,237.6) rotate(-90)" text-anchor="end">V<tspan dy="-6" font-size="12">2</tspan><tspan dy="6">/m</tspan><tspan dy="-6" font-size="12">2</tspan><tspan dy="6">/Hz</tspan></text>
<text x="295" y="413.7" text-anchor="start" xml:space="preserve" font-size="15.95">RBSP-A/ect-hope-L3  HOPE</text>
<g clip-path="url(#cpl)"><path d="M220.5 512.5V545.0M221.5 502.3V512.5M222.5 493.6V508.3M223.5 483.2V499.9M224.5 483.3V500.6M225.5 478.3V497.1M226.5 471.3V497.1M227.5 470.6V492.8M228.5 473.2V487.9M229.5 464.4V486.8M230.5 465.6V486.5M231.5 469.1V490.8M232.5 466.6V490.4M233.5 462.7V489.0M234.5 475.1V495.9M235.5 466.5V498.0M236.5 475.9V497.2M237.5 482.9V496.5M238.5 475.6V500.7M239.5 477.8V507.1M240.5 493.7V504.2M241.5 496.6V511.4M242.5 501.7V526.4M243.5 507.4V525.8M244.5 506.7V527.4M245.5 511.1V526.7M246.5 504.3V532.8M247.5 522.5V533.4M248.5 521.2V536.8M249.5 527.0V539.6M250.5 530.9V543.3M251.5 532.1V545.7M252.5 535.7V544.9M253.5 533.8V554.9M254.5 535.0V548.5M255.5 537.2V552.5M256.5 543.9V551.5M257.5 546.1V557.8M258.5 545.8V559.9M259.5 548.1V563.1M260.5 552.7V566.2M261.5 554.2V569.3M262.5 550.5V564.1M263.5 553.7V569.4M264.5 551.0V566.8M265.5 552.1V567.7M266.5 557.1V567.8M267.5 554.1V565.0M268.5 558.2V570.1M269.5 557.4V568.4M270.5 560.5V574.0M271.5 562.2V574.9M272.5 565.2V575.6M273.5 564.3V575.7M274.5 565.7V577.7M275.5 569.3V579.0M276.5 571.5V580.0M277.5 568.1V580.5M278.5 568.9V580.0M279.5 568.5V577.9M280.5 572.2V580.3M281.5 571.5V580.8M282.5 569.9V581.9M283.5 572.4V579.0M284.5 570.9V577.9M285.5 568.2V578.5M286.5 569.0V583.4M287.5 566.2V579.4M288.5 567.5V577.4M289.5 568.0V576.4M290.5 564.3V576.9M291.5 566.7V574.3M292.5 566.5V574.3M293.5 564.7V575.4M294.5 563.5V577.5M295.5 566.4V572.5M296.5 564.4V573.7M297.5 557.6V572.0M298.5 558.0V566.3M299.5 550.8V564.8M300.5 553.6V565.2M301.5 549.6V565.0M302.5 550.7V563.5M303.5 547.1V564.4M304.5 545.7V558.0M305.5 542.1V556.5M306.5 532.6V557.2M307.5 542.3V553.7M308.5 543.7V558.8M309.5 544.9V559.3M310.5 544.2V558.3M311.5 550.7V562.0M312.5 550.9V572.0M313.5 551.7V567.8M314.5 555.3V566.8M315.5 547.0V564.4M316.5 551.0V564.1M317.5 543.6V561.8M318.5 547.5V556.8M319.5 545.0V553.2M320.5 537.3V553.2M321.5 530.8V546.5M322.5 530.9V540.2M323.5 524.5V538.7M324.5 518.6V535.5M325.5 516.7V529.4M326.5 509.4V525.2M327.5 505.5V524.4M328.5 507.6V521.4M329.5 503.0V516.3M330.5 502.0V517.5M331.5 500.0V516.6M332.5 502.1V515.5M333.5 486.7V510.7M334.5 477.6V492.6M335.5 462.5V488.3M336.5 469.7V484.6M337.5 467.3V486.7M338.5 477.8V500.6M339.5 478.0V493.8M340.5 473.7V499.4M341.5 481.8V495.3M342.5 479.9V496.5M343.5 478.9V504.5M344.5 477.7V497.3M345.5 477.6V510.7M346.5 475.6V499.8M347.5 479.4V513.0M348.5 476.9V505.9M349.5 484.8V497.4M350.5 478.5V505.5M351.5 486.9V511.8M352.5 479.6V511.8M353.5 492.1V510.8M354.5 495.1V510.3M355.5 499.7V516.4M356.5 505.6V527.1M357.5 500.6V526.7M358.5 519.3V536.2M359.5 536.0V558.2M360.5 558.2V576.0M372.5 535.6V550.6M373.5 518.3V547.1M374.5 495.7V518.3M375.5 483.9V501.3M376.5 478.3V501.0M377.5 480.7V498.9M378.5 476.0V500.6M379.5 476.6V500.1M380.5 477.4V497.3M381.5 475.4V498.4M382.5 474.5V494.4M383.5 478.6V492.2M384.5 477.3V490.7M385.5 470.3V488.0M386.5 468.0V487.1M387.5 466.8V486.9M388.5 460.8V486.0M389.5 450.2V487.1M390.5 460.9V480.6M391.5 474.8V487.2M392.5 482.1V494.9M393.5 486.2V504.2M394.5 477.9V500.8M395.5 460.6V480.4M396.5 455.1V473.5M397.5 463.8V489.9M398.5 463.0V479.6M399.5 467.9V486.7M400.5 471.7V487.7M401.5 473.4V490.8M402.5 479.1V491.7M403.5 484.5V496.0M404.5 484.3V504.4M405.5 486.6V504.8M406.5 486.0V503.7M407.5 482.3V503.9M408.5 481.5V503.2M409.5 479.5V501.4M410.5 475.4V491.5M411.5 464.3V489.5M412.5 473.6V488.8M413.5 470.1V486.7M414.5 472.0V492.6M415.5 468.8V495.6M416.5 476.9V490.0M417.5 473.9V495.8M418.5 479.6V497.6M419.5 478.4V498.4M420.5 483.1V496.5M421.5 473.7V503.0M422.5 485.2V500.6M423.5 482.9V502.8M424.5 484.7V504.1M425.5 488.5V511.9M426.5 481.8V508.8M427.5 487.9V508.4M428.5 493.4V507.6M429.5 489.3V507.7M430.5 488.5V507.9M431.5 490.9V512.9M432.5 494.3V507.1M433.5 497.1V507.5M434.5 494.5V512.5M435.5 492.4V517.5M436.5 497.7V509.8M437.5 493.1V516.6M438.5 483.0V510.3M439.5 494.0V514.5M440.5 491.4V510.8M441.5 496.0V509.9M442.5 490.5V513.6M443.5 493.8V508.6M444.5 492.4V516.6M445.5 488.3V508.0M446.5 489.0V504.2M447.5 478.0V505.0M448.5 490.2V508.2M449.5 481.8V511.0M450.5 480.3V506.4M451.5 490.6V507.3M452.5 496.6V512.6M453.5 492.7V505.7M454.5 487.4V507.1M455.5 485.8V505.9M456.5 482.4V500.6M457.5 479.1V502.2M458.5 476.5V498.7M459.5 475.9V499.5M460.5 477.7V500.5M461.5 482.7V504.5M462.5 487.9V501.9M463.5 486.4V512.3M464.5 493.8V508.5M465.5 490.3V511.4M466.5 489.6V513.1M467.5 496.8V521.2M468.5 506.3V527.2M469.5 504.2V524.6M470.5 508.0V523.2M471.5 506.1V524.4M472.5 508.5V525.2M473.5 504.3V519.4M474.5 488.1V513.6M475.5 493.4V511.5M476.5 491.9V507.2M477.5 481.6V505.9M478.5 491.9V510.2M479.5 490.0V512.1M480.5 492.7V510.8M481.5 489.8V511.8M482.5 492.7V507.1M483.5 500.8V516.0M484.5 498.9V514.3M485.5 503.8V518.2M486.5 510.0V528.3M487.5 514.4V530.2M488.5 515.3V540.5M489.5 521.1V533.9M490.5 516.9V531.7M491.5 511.3V522.4M492.5 505.7V522.7M493.5 500.6V515.1M494.5 498.7V518.3M495.5 493.7V507.9M496.5 489.8V506.4M497.5 488.2V501.4M498.5 484.2V501.8M499.5 487.6V502.5M500.5 486.8V501.5M501.5 483.2V510.8M502.5 485.2V505.1M503.5 481.5V499.7M504.5 476.1V497.9M505.5 480.9V497.8M506.5 473.2V500.9M507.5 484.7V496.7M508.5 482.2V500.4M509.5 468.6V489.2M510.5 455.9V477.8M511.5 466.4V468.2M512.5 468.2V470.0M513.5 469.1V470.5M396.5 445.5V470M231.5 454.8V480M390.5 448.7V472M393.5 495V519.4M488.5 525V559.6M335.5 458.5V478" fill="none" stroke="#000" stroke-width="1.25"/></g>
<path d="M219.5 621.5 V440.5 H688.5 V621.5 Z" fill="none" stroke="#000" stroke-width="1"/>
<path d="M208 451.5 H219.5 M208 475.5 H219.5 M208 500.5 H219.5 M208 529.5 H219.5 M208 562.5 H219.5 M208 599.5 H219.5 M214 440.5 H219.5 M214 463.5 H219.5 M214 487.5 H219.5 M214 514.5 H219.5 M214 544.5 H219.5 M214 580.5 H219.5 M214 620.5 H219.5 " stroke="#000" stroke-width="1" fill="none"/>
<text x="202.3" y="457.3" text-anchor="end" >2.2</text>
<text x="202.3" y="481.3" text-anchor="end" >2.0</text>
<text x="202.3" y="506.3" text-anchor="end" >1.8</text>
<text x="202.3" y="535.3" text-anchor="end" >1.6</text>
<text x="202.3" y="567.8" text-anchor="end" >1.4</text>
<text x="202.3" y="605.3" text-anchor="end" >1.2</text>
<text transform="translate(166.2,531) rotate(-90)" text-anchor="middle">e Tperp/Tpar</text>
<text x="260.8" y="653" text-anchor="end" >00:00</text>
<text x="476.3" y="653" text-anchor="end" >12:00</text>
<text x="692.9" y="653" text-anchor="end" >00:00</text>
<text x="260.8" y="673" text-anchor="end" >4.225</text>
<text x="476.3" y="673" text-anchor="end" >5.756</text>
<text x="692.9" y="673" text-anchor="end" >5.017</text>
<text x="260.8" y="693" text-anchor="end" >-10.580</text>
<text x="476.3" y="693" text-anchor="end" >-1.544</text>
<text x="692.9" y="693" text-anchor="end" >-15.871</text>
<text x="260.8" y="713" text-anchor="end" >2.247</text>
<text x="476.3" y="713" text-anchor="end" >5.398</text>
<text x="692.9" y="713" text-anchor="end" >8.540</text>
<text x="260.8" y="733" text-anchor="end" >4.373</text>
<text x="476.3" y="733" text-anchor="end" >5.760</text>
<text x="692.9" y="733" text-anchor="end" >3.447</text>
<text x="167.3" y="673" text-anchor="end" >R</text>
<text x="167.6" y="677.8" font-size="9.6" style="stroke:#000;stroke-width:0.25px">E</text>
<text x="174.5" y="693" text-anchor="end" >MLat</text>
<text x="174.5" y="713" text-anchor="end" >MLT</text>
<text x="174.5" y="733" text-anchor="end" >L</text>
<text x="454" y="757" text-anchor="middle" >2012-12-01 (336) 23:00 to 2012-12-03 (338) 01:00</text>
</g></svg>
<span class="n" style="left:125.8px;top:777px;font-size:10px;letter-spacing:-0.208px;line-height:12px">plot_1 selected</span>

<div class="corner" style="left:1188px;top:244px;clip-path:polygon(0 0,100% 0,100% 100%)"></div><div id="dlg"></div><div id="dtitle"></div><div id="dbody"></div>
<span class="wt" style="left:770px;top:251px;color:#707070">Create PngWalk Options</span>
<svg style="left:511px;top:244px" width="681" height="26" viewBox="0 0 681 26"><path d="M13.5 10.5 L22.5 10.5 L18 16.5 Z" fill="#9a9a9a"/><path d="M658.5 12.2 L665.2 18.9 M665.2 12.2 L658.5 18.9" stroke="#f4f4f4" stroke-width="2.2" opacity="0.8"/><path d="M658.5 11.2 L665.2 17.9 M665.2 11.2 L658.5 17.9" stroke="#969696" stroke-width="2.3"/></svg>
<span class="b" style="left:526.3px;top:283px;letter-spacing:0.325px;">Output Folder:</span>
<div class="tf" style="left:538px;top:306px;width:537px;height:18px"></div>
<span class="n" style="left:540.3px;top:309px;letter-spacing:0.099px;">/home/jbf/tmp/pngwalk3</span>
<div class="btn" style="left:1082px;top:303px;width:62px;height:25px"></div>
<span class="b" style="left:1099.3px;top:309px;letter-spacing:0.246px;">Pick</span>
<div class="cb" style="left:542px;top:335px"></div>
<span class="b" style="left:559.8px;top:335px;letter-spacing:0.336px;">Overwrite</span>
<span class="b" style="left:526.3px;top:362px;letter-spacing:0.279px;">Filename Root:</span>
<div class="tf" style="left:538px;top:382px;width:436px;height:18px"></div>
<span class="n" style="left:540.3px;top:385px;letter-spacing:0.449px;">product</span>
<span class="b" style="left:1000.3px;top:362px;letter-spacing:0.288px;">Version (Optional):</span>
<div class="tf" style="left:1012px;top:382px;width:73px;height:18px"></div>
<span class="b" style="left:526.3px;top:408px;letter-spacing:0.147px;">Time Format:</span>
<div style="left:538px;top:428px;width:293px;height:24px;background:#fff;border:1px solid #7a8a99;border-right-color:#b8cfe5;box-shadow:inset 1px 1px 0 #b8cfe5,inset 0 -1px 0 #b8cfe5;"></div><div class="btn" style="left:831px;top:428px;width:20px;height:24px"></div><svg style="left:831px;top:428px" width="20" height="24" viewBox="0 0 20 24"><path d="M5.0 10.0 L15.0 10.0 L10.0 15.2 Z" fill="#333"/></svg>
<span class="b" style="left:540.8px;top:433px;letter-spacing:-0.064px;">$Y$m$d_$(H,delta=12)</span>
<span class="b" style="left:1000.3px;top:408px;letter-spacing:0.264px;">Rescale (Optional):</span>
<div style="left:1012px;top:428px;width:154px;height:24px;background:#fff;border:1px solid #7a8a99;border-right-color:#b8cfe5;box-shadow:inset 1px 1px 0 #b8cfe5,inset 0 -1px 0 #b8cfe5;"></div><div class="btn" style="left:1166px;top:428px;width:20px;height:24px"></div><svg style="left:1166px;top:428px" width="20" height="24" viewBox="0 0 20 24"><path d="M5.0 10.0 L15.0 10.0 L10.0 15.2 Z" fill="#333"/></svg>
<span class="b" style="left:1014.8px;top:433px;letter-spacing:-0.174px;">0%,100%</span>
<div class="cb" style="left:1004px;top:459px"></div>
<span class="b" style="left:1021.3px;top:459px;letter-spacing:0.362px;">Autorange Each</span>
<div class="cb dis" style="left:1016px;top:482px"></div><svg style="left:1016px;top:482px" width="13" height="13" viewBox="0 0 13 13"><path d="M2.7 5.6 L5 5.6 L5.6 7.6 L9.4 2.7 L10.4 3.4 L5.6 10 L4.1 10 Z" fill="#7f90a2"/></svg>
<span class="b dis" style="left:1033.8px;top:482px;letter-spacing:0.314px;">Check Autorange flag</span>
<div class="cb" style="left:1004px;top:507px"></div>
<span class="b" style="left:1021.3px;top:507px;letter-spacing:0.479px;">Update Sequence</span>
<div class="cb" style="left:1004px;top:530px"></div><svg style="left:1004px;top:530px" width="13" height="13" viewBox="0 0 13 13"><path d="M2.7 5.6 L5 5.6 L5.6 7.6 L9.4 2.7 L10.4 3.4 L5.6 10 L4.1 10 Z" fill="#1a1a1a"/></svg>
<span class="b" style="left:1021.3px;top:530px;letter-spacing:0.285px;">Run in background</span>
<div class="rb on" style="left:530px;top:482px"></div>
<span class="b" style="left:547.6px;top:482px;letter-spacing:0.267px;">Generate intervals to cover time range:</span>
<div class="tf" style="left:538px;top:507px;width:305px;height:18px"></div>
<span class="n" style="left:540.8px;top:510px;letter-spacing:0.294px;">2012-12</span>
<div class="btn" style="left:850px;top:502px;width:48px;height:24px"></div>
<svg style="left:866px;top:506px" width="16" height="16" viewBox="0 0 16 16">
<rect x="1.7" y="1.7" width="12.6" height="12.6" rx="1" fill="#fff" stroke="#4b87d9" stroke-width="1.3"/>
<rect x="3" y="3" width="10" height="3" fill="#ff7d1c"/><rect x="4" y="3.8" width="8" height="1.2" fill="#ffa850"/>
<path d="M2.5 6.5 H13.5 M2.5 8.5 H13.5 M2.5 10.5 H13.5 M2.5 12.5 H11 M3.5 6 V13.5 M5.5 6 V13.5 M7.5 6 V13.5 M9.5 6 V13.5 M11.5 6 V11" stroke="#a4c1ee" stroke-width="1"/>
<rect x="7" y="7" width="3" height="3" fill="#2da045"/>
</svg>
<div class="rb" style="left:530px;top:538px"></div>
<span class="b" style="left:547.6px;top:538px;letter-spacing:0.275px;">Use events file that contains list of times:</span>
<div style="left:538px;top:557px;width:366px;height:27px;background:#fff;border:1px solid #b8cfe5;border-right-color:#b8cfe5;"></div><div class="btn dis" style="left:904px;top:557px;width:20px;height:27px"></div><svg style="left:904px;top:557px" width="20" height="27" viewBox="0 0 20 27"><path d="M5.0 11.5 L15.0 11.5 L10.0 16.7 Z" fill="#b8cfe5"/></svg>
<span class="b" style="left:540.8px;top:564px;letter-spacing:0.029px;color:#b8cfe5;width:363px;overflow:hidden;height:16px">file:///home/jbf/project/juno/u/masafumi/20181109//O</span>
<div class="btn dis" style="left:930px;top:557px;width:26px;height:27px"></div>
<div class="btn dis" style="left:962px;top:557px;width:26px;height:27px"></div>
<svg style="left:930px;top:557px" width="26" height="27" viewBox="0 0 26 27"><path d="M8.5 7.5 L18.5 13 L8.5 18.5 Z" fill="#c9c9c9" stroke="#bdbdbd" stroke-width="1" stroke-linejoin="round"/></svg>
<svg style="left:962px;top:557px" width="26" height="27" viewBox="0 0 26 27"><path d="M5.5 9.5 H10 L11.5 11 H18.5 V19.5 H5.5 Z" fill="#cfcfcf"/><path d="M5.5 19.5 L8 13.5 H20.5 L18.5 19.5 Z" fill="#d9d9d9"/><circle cx="17" cy="10" r="3.3" fill="#d4d4d4"/></svg>
<div class="cb dis" style="left:542px;top:593px"></div>
<span class="b dis" style="left:559.3px;top:592px;letter-spacing:0.295px;">Events file specifies product names</span>
<div class="cb" style="left:530px;top:616px"></div><svg style="left:530px;top:616px" width="13" height="13" viewBox="0 0 13 13"><path d="M2.7 5.6 L5 5.6 L5.6 7.6 L9.4 2.7 L10.4 3.4 L5.6 10 L4.1 10 Z" fill="#1a1a1a"/></svg>
<span class="b" style="left:547.6px;top:615px;letter-spacing:0.344px;">Create Thumbs</span>
<span class="b" style="left:693.8px;top:615px;letter-spacing:0.275px;">Output Format:</span>
<div class="rb on" style="left:814px;top:615px"></div>
<span class="b" style="left:831.3px;top:615px;letter-spacing:0.250px;">PNG</span>
<div class="rb" style="left:868px;top:615px"></div>
<span class="b" style="left:885.3px;top:615px;letter-spacing:0.249px;">PDF</span>
<div class="btn" style="left:1040px;top:686px;width:81px;height:25px"></div>
<span class="b" style="left:1057.8px;top:692px;letter-spacing:0.398px;">Cancel</span>
<div class="btn" style="left:1128px;top:686px;width:54px;height:25px"></div>
<span class="b" style="left:1145.8px;top:692px;letter-spacing:0.800px;">OK</span>
<svg id="cursor" style="left:436px;top:108px" width="40" height="54" viewBox="0 0 40 54">
<defs><linearGradient id="gcu" x1="0" y1="0" x2="1" y2="1"><stop offset="0.35" stop-color="#ffffff"/><stop offset="1" stop-color="#d8d8d8"/></linearGradient></defs>
<path d="M5.60 6.26 L5.60 31.78 L14.83 27.40 L23.83 46.40 L31.70 42.67 L22.91 24.10 L28.51 21.21 Z" fill="#161616" stroke="#161616" stroke-width="4.8" stroke-linejoin="round"/>
<path d="M6.60 8.11 L6.60 30.20 L15.30 26.07 L24.30 45.07 L30.37 42.20 L21.60 23.65 L26.53 21.11 Z" fill="url(#gcu)" stroke="#fafafa" stroke-width="0.5" stroke-linejoin="round"/>
</svg>
</body></html>
